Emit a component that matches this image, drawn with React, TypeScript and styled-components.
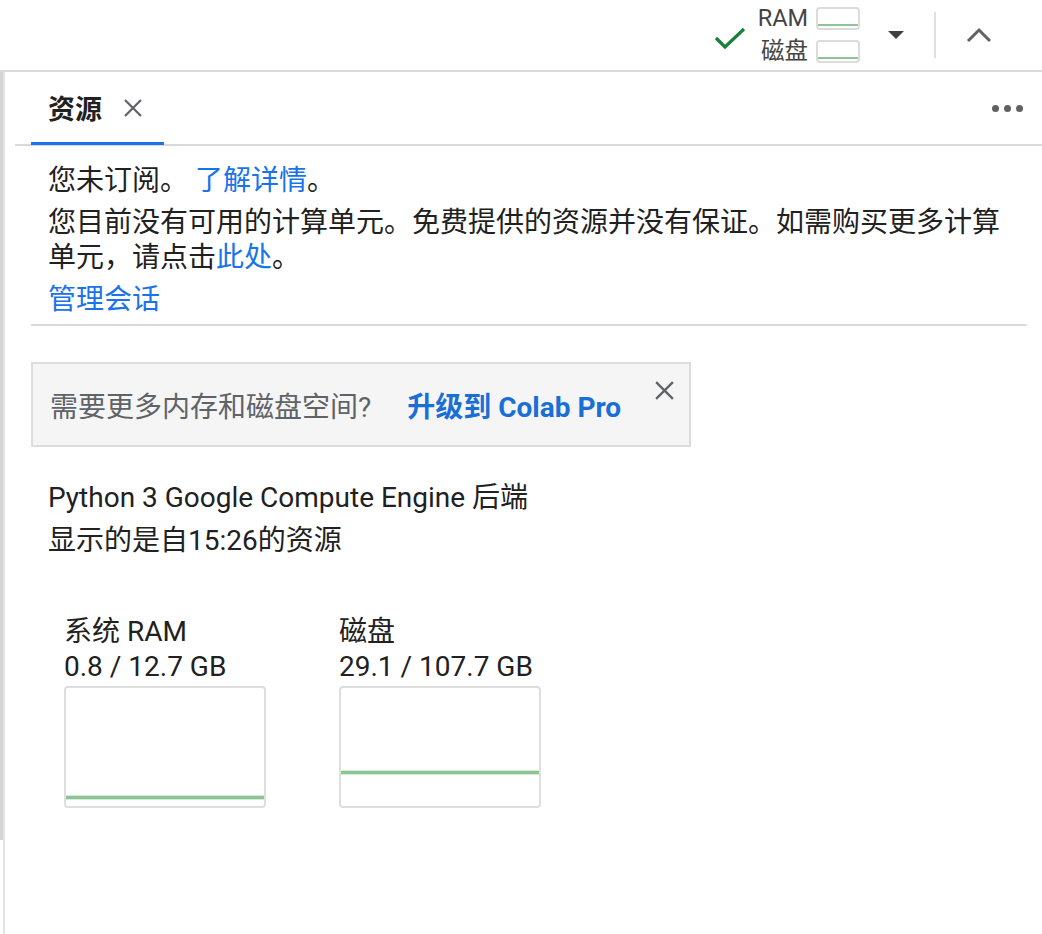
import styled, { createGlobalStyle } from 'styled-components'

const GlobalStyle = createGlobalStyle`
	html, body {
		margin: 0;
		padding: 0;
		background: #fff;
	}
	body {
		font-family: Roboto, 'Noto Sans CJK SC', sans-serif;
		color: #212121;
	}
`

const usage = [
	{ label: '系统 RAM', used: 0.8, total: 12.7 },
	{ label: '磁盘', used: 29.1, total: 107.7 },
]

const CloseIcon = ({ size }: { size: number }) => (
	<svg width={size} height={size} viewBox='0 0 20 20'>
		<path d='M2 2 L18 18 M18 2 L2 18' stroke='#5f6368' strokeWidth='2.2' fill='none' />
	</svg>
)

export default function App() {
	return (
		<>
			<GlobalStyle />
			<Page>
				<TopBar>
					<CheckMark width='32' height='24' viewBox='0 0 32 24'>
						<path d='M2 12 L11 21 L30 3' stroke='#188038' strokeWidth='3.2' fill='none' />
					</CheckMark>
					<Meters>
						<MeterRow>
							<MeterLabel>RAM</MeterLabel>
							<MiniChart>
								<MiniLine />
							</MiniChart>
						</MeterRow>
						<MeterRow>
							<MeterLabel>磁盘</MeterLabel>
							<MiniChart>
								<MiniLine />
							</MiniChart>
						</MeterRow>
					</Meters>
					<Caret />
					<Divider />
					<Chevron width='26' height='16' viewBox='0 0 26 16'>
						<path d='M2 14 L13 3 L24 14' stroke='#5f6368' strokeWidth='3' fill='none' />
					</Chevron>
				</TopBar>
				<Body>
					<Rail>
						<RailThumb />
					</Rail>
					<Panel>
						<TabStrip>
							<Tab>
								<TabTitle>资源</TabTitle>
								<CloseIcon size={20} />
							</Tab>
							<Dots>
								<Dot />
								<Dot />
								<Dot />
							</Dots>
						</TabStrip>
						<Content>
							<Para>
								您未订阅。 <Link>了解详情</Link>。
							</Para>
							<Para>
								您目前没有可用的计算单元。免费提供的资源并没有保证。如需购买更多计算单元，请点击<Link>此处</Link>。
							</Para>
							<Para>
								<Link>管理会话</Link>
							</Para>
							<Separator />
							<Banner>
								<BannerText>需要更多内存和磁盘空间?</BannerText>
								<UpgradeLink>升级到 Colab Pro</UpgradeLink>
								<BannerClose>
									<CloseIcon size={21} />
								</BannerClose>
							</Banner>
							<Info>
								Python 3 Google Compute Engine 后端
								<br />
								显示的是自15:26的资源
							</Info>
							<Charts>
								{usage.map((u) => (
									<ChartBlock key={u.label}>
										<ChartLabel>{u.label}</ChartLabel>
										<ChartLabel>
											{u.used} / {u.total} GB
										</ChartLabel>
										<ChartBox>
											<UsageLine
												style={{
													bottom: `${Math.round((u.used / u.total) * 121 - 1)}px`,
												}}
											/>
										</ChartBox>
									</ChartBlock>
								))}
							</Charts>
						</Content>
					</Panel>
				</Body>
			</Page>
		</>
	)
}

const Page = styled.div`
	width: 1042px;
	height: 934px;
	display: flex;
	flex-direction: column;
	overflow: hidden;
`

const TopBar = styled.div`
	height: 70px;
	flex-shrink: 0;
	border-bottom: 2px solid #dadada;
	display: flex;
	align-items: center;
	justify-content: flex-end;
	padding-right: 50px;
`

const CheckMark = styled.svg`
	margin-top: 5px;
	margin-right: 12px;
`

const Meters = styled.div`
	display: flex;
	flex-direction: column;
	gap: 10px;
`

const MeterRow = styled.div`
	display: flex;
	align-items: center;
	justify-content: flex-end;
	gap: 8px;
`

const MeterLabel = styled.span`
	font-size: 23.5px;
	line-height: 23px;
	color: #444;
`

const MiniChart = styled.div`
	position: relative;
	width: 40px;
	height: 19px;
	border: 2px solid #dcdcdc;
	border-radius: 4px;
`

const MiniLine = styled.div`
	position: absolute;
	left: 0;
	right: 0;
	bottom: 2px;
	height: 2px;
	background: #8ec497;
`

const Caret = styled.div`
	width: 0;
	height: 0;
	margin-left: 28px;
	border-left: 8px solid transparent;
	border-right: 8px solid transparent;
	border-top: 8px solid #3c4043;
`

const Divider = styled.div`
	width: 2px;
	height: 46px;
	background: #e0e0e0;
	margin: 0 30px;
`

const Chevron = styled.svg``

const Body = styled.div`
	flex: 1;
	display: flex;
`

const Rail = styled.div`
	width: 3px;
	flex-shrink: 0;
`

const RailThumb = styled.div`
	height: 768px;
	background: #d4d4d4;
`

const Panel = styled.div`
	flex: 1;
	border-left: 2px solid #e4e4e4;
	padding-left: 10px;
	display: flex;
	flex-direction: column;
`

const TabStrip = styled.div`
	height: 72px;
	border-bottom: 2px solid #dadada;
	display: flex;
	align-items: flex-end;
	justify-content: space-between;
`

const Tab = styled.div`
	margin-left: 16px;
	width: 133px;
	height: 100%;
	box-sizing: border-box;
	padding-left: 17px;
	border-bottom: 3px solid #1a73e8;
	margin-bottom: -1px;
	display: flex;
	align-items: center;
	gap: 21px;
`

const TabTitle = styled.span`
	font-size: 27px;
	font-weight: 700;
	color: #212121;
`

const Dots = styled.div`
	align-self: center;
	display: flex;
	gap: 5px;
	margin-right: 19px;
`

const Dot = styled.span`
	width: 7px;
	height: 7px;
	border-radius: 50%;
	background: #616161;
`

const Content = styled.div`
	padding: 17px 15px 0 16px;
	display: flex;
	flex-direction: column;
	align-items: flex-start;
`

const Para = styled.p`
	margin: 0 0 7px;
	padding-left: 17px;
	font-size: 28px;
	line-height: 35px;
	color: #212121;
`

const Link = styled.span`
	color: #1a73e8;
	cursor: pointer;
`

const Separator = styled.div`
	align-self: stretch;
	height: 2px;
	background: #dadada;
`

const Banner = styled.div`
	position: relative;
	margin-top: 36px;
	width: 660px;
	height: 85px;
	box-sizing: border-box;
	background: #f5f5f5;
	border: 2px solid #dcdcdc;
	display: flex;
	align-items: center;
	padding-left: 17px;
	gap: 36px;
`

const BannerText = styled.span`
	font-size: 28px;
	color: #5f6368;
`

const UpgradeLink = styled.span`
	font-size: 28px;
	font-weight: 700;
	color: #1a6fd6;
`

const BannerClose = styled.div`
	position: absolute;
	top: 16px;
	right: 14px;
	display: flex;
`

const Info = styled.div`
	margin-top: 29px;
	padding-left: 17px;
	font-size: 28px;
	line-height: 43px;
	color: #212121;
`

const Charts = styled.div`
	margin-top: 52px;
	padding-left: 33px;
	display: flex;
	gap: 73px;
`

const ChartBlock = styled.div`
	display: flex;
	flex-direction: column;
	width: 202px;
`

const ChartLabel = styled.div`
	font-size: 28px;
	line-height: 35px;
	color: #212121;
	white-space: nowrap;
`

const ChartBox = styled.div`
	position: relative;
	margin-top: 2px;
	height: 122px;
	box-sizing: border-box;
	border: 2px solid #dedede;
	border-radius: 4px;
`

const UsageLine = styled.div`
	position: absolute;
	left: 0;
	right: 0;
	height: 3px;
	background: #8cc594;
	box-shadow: 0 0 0 1px #d5ead7;
`
